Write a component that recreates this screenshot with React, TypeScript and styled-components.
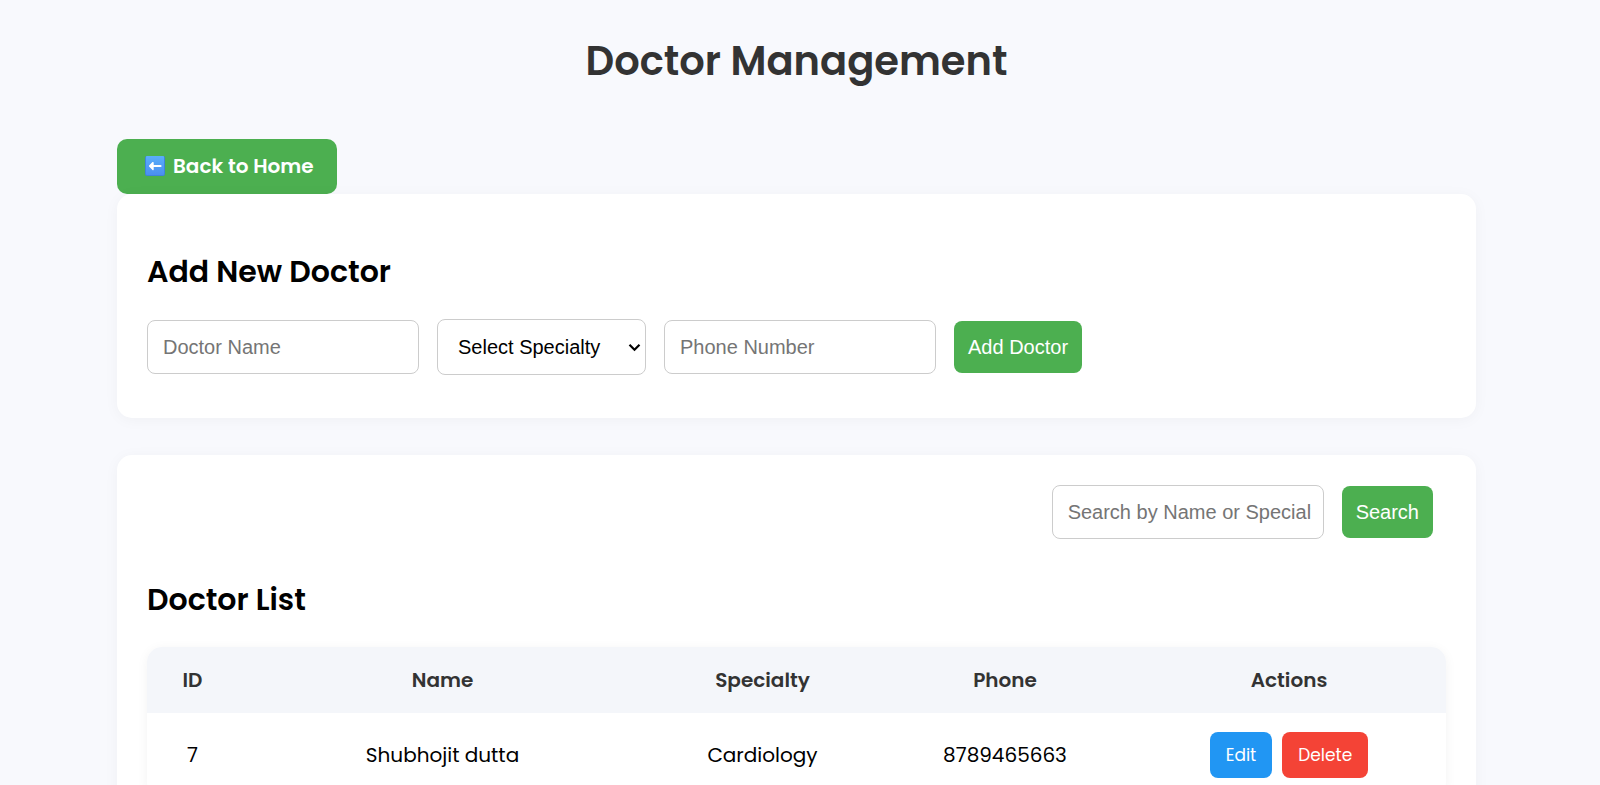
import React from "react";
import styled, { createGlobalStyle } from "styled-components";

const GlobalStyle = createGlobalStyle`
  *, *::before, *::after { box-sizing: border-box; }
  body {
    margin: 0;
    background: #f8f9fd;
    color: #000;
    font-family: Poppins, Inter, "Open Sans", sans-serif;
    font-size: 20px;
  }
`;

const Page = styled.main`
  padding: 31px 124px 40px 117px;
`;

const Title = styled.h1`
  margin: 0 0 48px;
  font-size: 40px;
  font-weight: 600;
  line-height: 60px;
  text-align: center;
  color: #333;
`;

const BackLink = styled.a`
  display: flex;
  align-items: center;
  gap: 8px;
  width: 220px;
  height: 55px;
  padding: 0 0 2px 28px;
  border-radius: 10px;
  background: #4caf50;
  color: #fff;
  font-weight: 600;
  text-decoration: none;
  white-space: nowrap;
`;

const Card = styled.section`
  display: flex;
  flex-direction: column;
  margin-bottom: 37px;
  padding: 30px;
  border-radius: 15px;
  background: #fff;
  box-shadow: 0 2px 15px rgba(0, 0, 0, 0.04);
`;

const Heading = styled.h2`
  margin: 26px 0 25px;
  font-size: 30px;
  font-weight: 600;
  line-height: 44px;
`;

const FormRow = styled.form<{ $end?: boolean }>`
  display: flex;
  flex-wrap: wrap;
  align-items: center;
  justify-content: ${(p) => (p.$end ? "flex-end" : "flex-start")};
  gap: 18px;
  margin-bottom: 13px;
  padding-right: ${(p) => (p.$end ? "13px" : "0")};
`;

const controlFont = `
  font-family: Arial, "Liberation Sans", sans-serif;
  font-size: 20px;
`;

const TextInput = styled.input`
  ${controlFont}
  width: 272px;
  height: 54px;
  padding: 0 12px 0 15px;
  border: 1px solid #ccc;
  border-radius: 8px;
  background: #fff;
  &::placeholder { color: #757575; }
`;

const SelectWrap = styled.div`
  position: relative;
  width: 209px;
  height: 56px;
`;

const Select = styled.select`
  ${controlFont}
  width: 100%;
  height: 100%;
  padding: 0 24px 0 20px;
  border: 1px solid #ccc;
  border-radius: 8px;
  background: #fff;
  color: #000;
  appearance: none;
`;

const Chevron = styled.svg`
  position: absolute;
  top: 24px;
  right: 5px;
  pointer-events: none;
`;

const SubmitButton = styled.button`
  ${controlFont}
  height: 52px;
  padding: 0 14px;
  border: 0;
  border-radius: 8px;
  background: #4caf50;
  color: #fff;
  cursor: pointer;
`;

const Table = styled.table`
  width: 100%;
  table-layout: fixed;
  border-collapse: collapse;
  border-radius: 15px;
  overflow: hidden;
  background: #fff;
  box-shadow: 0 2px 12px rgba(0, 0, 0, 0.05);
`;

const HeadCell = styled.th`
  height: 66px;
  padding: 0;
  background: #f4f6fa;
  color: #333;
  font-weight: 600;
`;

const Cell = styled.td`
  height: 84px;
  padding: 0;
  text-align: center;
`;

const Actions = styled.div`
  display: flex;
  justify-content: center;
  gap: 10px;
`;

const ActionButton = styled.button<{ $color: string }>`
  height: 46px;
  padding: 0 16px;
  border: 0;
  border-radius: 8px;
  background: ${(p) => p.$color};
  color: #fff;
  font-family: inherit;
  font-size: 17px;
  cursor: pointer;
`;

const ArrowIcon = () => (
  <svg width="20" height="20" viewBox="0 0 20 20" aria-hidden="true">
    <defs>
      <linearGradient id="tile" x1="0" y1="0" x2="0" y2="1">
        <stop offset="0" stopColor="#5aaefa" />
        <stop offset="1" stopColor="#4b8ff0" />
      </linearGradient>
    </defs>
    <rect width="20" height="20" rx="2" fill="#3f83dc" />
    <rect x="1" width="18" height="19" rx="1" fill="url(#tile)" />
    <path d="M15.5 10H6" fill="none" stroke="#fff" strokeWidth="2.2" strokeLinecap="round" />
    <path d="M8 6.6L4.6 10L8 13.4Z" fill="#fff" stroke="#fff" strokeWidth="1.4" strokeLinejoin="round" />
  </svg>
);

const columns = [
  { label: "ID", width: 91 },
  { label: "Name", width: 409 },
  { label: "Specialty", width: 231 },
  { label: "Phone", width: 254 },
  { label: "Actions", width: 314 },
];

const doctors = [
  { id: 7, name: "Shubhojit dutta", specialty: "Cardiology", phone: "8789465663" },
];

const stay = (e: React.FormEvent) => e.preventDefault();

export default function App() {
  return (
    <>
      <GlobalStyle />
      <Page>
        <Title>Doctor Management</Title>
        <BackLink href="#home">
          <ArrowIcon />
          Back to Home
        </BackLink>
        <Card>
          <Heading>Add New Doctor</Heading>
          <FormRow onSubmit={stay}>
            <TextInput type="text" placeholder="Doctor Name" aria-label="Doctor Name" />
            <SelectWrap>
              <Select aria-label="Specialty" defaultValue="">
                <option value="">Select Specialty</option>
                <option>Cardiology</option>
              </Select>
              <Chevron width="13" height="9" viewBox="0 0 13 9" aria-hidden="true">
                <path d="M1.5 1.8L6.5 6.8L11.5 1.8" fill="none" stroke="#000" strokeWidth="2.2" />
              </Chevron>
            </SelectWrap>
            <TextInput type="text" placeholder="Phone Number" aria-label="Phone Number" />
            <SubmitButton type="submit">Add Doctor</SubmitButton>
          </FormRow>
        </Card>
        <Card>
          <FormRow $end onSubmit={stay}>
            <TextInput
              type="text"
              placeholder="Search by Name or Specialty"
              aria-label="Search by Name or Specialty"
            />
            <SubmitButton type="submit">Search</SubmitButton>
          </FormRow>
          <Heading>Doctor List</Heading>
          <Table>
            <colgroup>
              {columns.map((c) => (
                <col key={c.label} width={c.width} />
              ))}
            </colgroup>
            <thead>
              <tr>
                {columns.map((c) => (
                  <HeadCell key={c.label} scope="col">{c.label}</HeadCell>
                ))}
              </tr>
            </thead>
            <tbody>
              {doctors.map((d) => (
                <tr key={d.id}>
                  <Cell>{d.id}</Cell>
                  <Cell>{d.name}</Cell>
                  <Cell>{d.specialty}</Cell>
                  <Cell>{d.phone}</Cell>
                  <Cell>
                    <Actions>
                      <ActionButton type="button" $color="#2196f3">Edit</ActionButton>
                      <ActionButton type="button" $color="#f44336">Delete</ActionButton>
                    </Actions>
                  </Cell>
                </tr>
              ))}
            </tbody>
          </Table>
        </Card>
      </Page>
    </>
  );
}
